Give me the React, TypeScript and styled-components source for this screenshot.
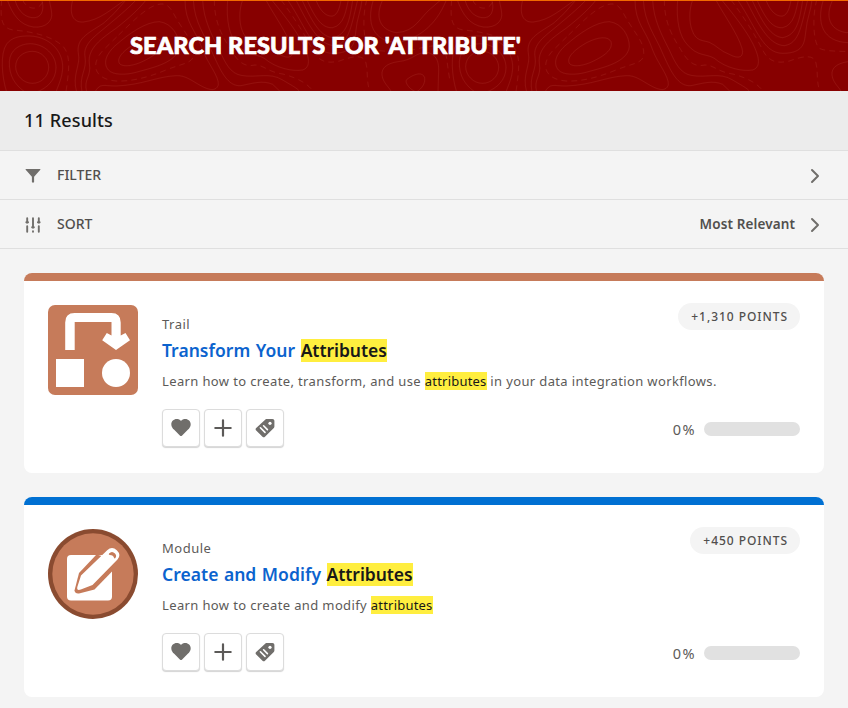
import React from "react";
import styled, { createGlobalStyle } from "styled-components";

const GlobalStyle = createGlobalStyle`
  *, *::before, *::after { box-sizing: border-box; }
  html, body { margin: 0; background: #f4f4f4; }
  body { font-family: "Noto Sans", "Open Sans", sans-serif; color: #514f4d; overflow: hidden; }
`;

const Page = styled.div`
  height: 708px;
  overflow: hidden;
  background: #f4f4f4;
`;

const Hero = styled.header`
  position: relative;
  display: flex;
  align-items: center;
  height: 91px;
  padding: 0 130px 2px;
  border-top: 1px solid #f26a00;
  background: #870000;
`;

const Contours = styled.svg`
  position: absolute;
  inset: 0;
  width: 100%;
  height: 90px;
`;

const HeroTitle = styled.h1`
  position: relative;
  margin: 0;
  font: 900 23.5px/32px Lato, sans-serif;
  letter-spacing: 0.12px;
  -webkit-text-stroke: 0.7px #fff;
  text-transform: uppercase;
  white-space: nowrap;
  color: #fff;
`;

const ResultsBar = styled.div`
  height: 60px;
  padding: 0 24px;
  border-bottom: 1px solid #dfdfdf;
  background: #ececec;
  font-size: 18px;
  font-weight: 500;
  line-height: 59px;
  letter-spacing: 0.15px;
  color: #181818;
`;

const OptionRow = styled.div`
  display: flex;
  align-items: center;
  height: 49px;
  padding: 0 28px 0 25px;
  border-bottom: 1px solid #dfdfdf;
  font-size: 14px;
  font-weight: 500;
  line-height: 20px;
  color: #514f4d;
  & > svg { flex: none; position: relative; top: 1px; }
`;

const OptionLabel = styled.span`
  flex: 1;
  margin-left: 16px;
`;

const OptionValue = styled.span`
  margin-right: 15px;
  font-size: 13.5px;
  font-weight: 600;
  letter-spacing: 0.12px;
`;

const CardList = styled.main`
  display: flex;
  flex-direction: column;
  gap: 24px;
  padding: 24px;
`;

const Card = styled.article<{ $accent: string }>`
  height: 200px;
  border-radius: 8px;
  overflow: hidden;
  background: #fff;
  &::before { content: ""; display: block; height: 8px; background: ${(p) => p.$accent}; }
`;

const CardBody = styled.div`
  display: flex;
  height: 192px;
  padding: 24px;
  & > svg { flex: none; }
`;

const Details = styled.div`
  flex: 1;
  display: flex;
  flex-direction: column;
  margin-left: 24px;
`;

const TopLine = styled.div`
  display: flex;
  justify-content: space-between;
  height: 30px;
`;

const Kind = styled.span`
  padding-top: 9px;
  font-size: 13px;
  line-height: 20px;
  letter-spacing: 0.5px;
  color: #5c5a58;
`;

const Points = styled.span`
  height: 27px;
  margin-top: -2px;
  padding: 0 12px 0 13px;
  border-radius: 14px;
  background: #f4f4f4;
  font-size: 12px;
  font-weight: 500;
  line-height: 27px;
  letter-spacing: 0.95px;
  white-space: nowrap;
`;

const Title = styled.h2`
  margin: 0;
  font-size: 17.5px;
  font-weight: 600;
  line-height: 30px;
  letter-spacing: 0.03px;
  word-spacing: 0.9px;
  color: #0b63ce;
`;

const Mark = styled.mark<{ $tall?: boolean }>`
  display: inline-block;
  height: ${(p) => (p.$tall ? 23 : 18)}px;
  line-height: ${(p) => (p.$tall ? 23 : 18)}px;
  letter-spacing: ${(p) => (p.$tall ? -0.05 : 0.2)}px;
  background: #ffee3f;
  color: #181818;
`;

const Summary = styled.p`
  margin: 6px 0 0;
  font-size: 13px;
  line-height: 20px;
  letter-spacing: 0.37px;
  white-space: nowrap;
  color: #5c5a58;
`;

const Footer = styled.div`
  display: flex;
  align-items: center;
  height: 38px;
  margin-top: 18px;
`;

const IconButton = styled.button`
  display: grid;
  place-items: center;
  width: 38px;
  height: 38px;
  margin: 0 4px 0 0;
  padding: 0;
  border: 1px solid #dcdcdc;
  border-radius: 4px;
  background: #fff;
  box-shadow: 0 1px 1px #d4d4d4;
`;

const Percent = styled.span`
  margin: 2px 8px 0 auto;
  font-size: 14.5px;
  line-height: 20px;
  letter-spacing: 1.4px;
  color: #5c5a58;
`;

const Track = styled.div`
  width: 96px;
  height: 14px;
  margin-top: 2px;
  border-radius: 7px;
  background: #e1e1e1;
`;

/* One contour tile is 450px wide, drawn on a grid three times finer. */
const solidContours = [
  "M22 0C38 45 60 75 100 81C140 85 158 60 155 40C154 25 150 15 148 0",
  "M45 0C55 38 80 55 105 53C130 50 132 20 125 0",
  "M218 0C205 50 225 68 250 66C300 60 330 30 375 0",
  "M97 154C124 154 146 176 146 202C146 229 124 250 97 250C70 250 47 226 47 200C47 172 70 154 97 154Z",
  "M90 131C135 132 168 165 168 203C168 240 140 265 110 276M75 276C45 255 27 228 28 185C30 150 58 132 90 131",
  "M90 108C145 110 190 150 188 205C186 235 175 255 168 276M20 276C5 230 0 160 20 132C35 112 60 107 90 108",
  "M230 276C215 225 243 195 235 160C228 115 265 100 310 70C340 45 360 20 378 0",
  "M246 276C236 225 262 210 255 170C248 130 290 105 325 75C360 45 385 25 408 0",
  "M260 276C250 235 275 232 268 190C262 145 305 115 348 85C380 60 415 30 438 0",
  "M358 190C348 170 380 145 410 128C445 110 475 108 483 125C490 150 460 170 420 188C390 200 365 200 358 190Z",
  "M348 135C388 100 438 65 478 65C518 70 538 110 538 140C533 190 448 205 408 217C378 225 340 226 325 210C305 185 325 155 348 135",
  "M555 0C555 70 588 90 608 150C623 190 658 230 655 255C648 275 628 270 608 260C578 245 558 225 528 227C468 230 428 255 348 258C310 258 300 248 285 276",
  "M580 0C583 70 618 110 638 160C663 215 683 260 723 257C758 250 788 240 818 253L842 276",
  "M608 0C610 60 638 110 658 150C678 195 693 220 723 226C768 235 808 215 848 240C878 258 893 265 900 276",
  "M683 0C678 60 688 110 713 135C743 170 768 160 793 175C828 205 878 215 908 210C938 200 923 160 908 130C888 90 848 40 815 0",
  "M728 0C716 30 718 70 726 90C738 125 758 120 778 127C798 135 813 155 838 163C868 180 883 170 876 145C863 100 818 40 798 0",
  "M948 0C963 40 983 50 998 48C1013 45 1020 20 1023 0",
  "M921 0C948 60 968 85 998 83C1033 75 1038 30 1045 0",
  "M906 0C938 70 963 110 998 113C1038 105 1048 70 1058 0",
  "M888 0C928 80 958 135 1003 137C1048 130 1053 80 1073 0",
  "M863 0C918 80 938 160 998 160C1068 160 1063 120 1068 90C1070 60 1083 30 1086 0",
  "M1148 0C1124 50 1139 90 1189 98C1249 95 1259 50 1299 20L1322 0",
  "M1120 0C1098 70 1119 125 1194 128C1279 110 1319 50 1339 0",
  "M1174 276C1169 262 1149 250 1146 225C1144 205 1159 190 1194 185C1244 180 1245 155 1285 158C1310 165 1316 185 1316 210L1314 276",
  "M1249 276C1230 270 1210 245 1222 237C1245 220 1268 215 1274 233C1276 250 1267 265 1249 276",
];
const dashedContours = [
  "M5 0C0 60 5 85 40 90C100 95 160 110 190 140C215 170 205 220 198 276",
  "M68 0C80 30 120 35 130 0",
  "M356 105C398 65 448 10 488 12C513 15 518 40 538 70C563 110 583 130 581 165C578 190 548 190 498 210C438 235 388 245 348 243C285 238 268 195 310 150Z",
  "M643 0C643 70 668 110 693 150C713 185 733 200 758 196C788 190 798 215 848 222C898 235 928 255 940 276",
  "M843 0C888 60 918 110 938 150C958 190 988 190 1018 183C1068 165 1093 165 1098 190C1105 220 1098 240 1110 276",
  "M1100 0C1086 50 1090 130 1108 145C1128 155 1168 153 1194 155C1240 155 1290 130 1322 140C1350 150 1335 230 1364 276",
];

function ContourPattern() {
  return (
    <Contours aria-hidden="true">
      <defs>
        <pattern id="contours" width="1350" height="276" patternUnits="userSpaceOnUse" patternTransform="translate(0 -1) scale(.33333)">
          <g fill="none" stroke="#ffa080" strokeOpacity=".1" strokeWidth="3">
            {solidContours.map((d) => <path key={d} d={d} />)}
            {dashedContours.map((d) => <path key={d} d={d} strokeDasharray="17 13" />)}
          </g>
        </pattern>
      </defs>
      <rect width="100%" height="100%" fill="url(#contours)" />
    </Contours>
  );
}

const FunnelIcon = () => (
  <svg width="16" height="16" viewBox="0 0 16 16" fill="#706e6b">
    <path d="M1.100.9h13.800c.5 0 .7.5.4.900L9.100 8.700v5.200c0 .4-.3.700-.6.700h-1c-.3 0-.6-.3-.6-.7V8.700L.7 1.800C.4 1.400.6.9 1.100.9Z" />
  </svg>
);

const SlidersIcon = () => (
  <svg width="16" height="16" viewBox="0 0 16 16" fill="none" stroke="#706e6b" strokeLinecap="round">
    <path strokeWidth="1.900" d="M2.200 1.300v4M2.200 9.300v5.400M8 1.300v9M8 14.300v.5M13.800 1.300v4M13.800 9.300v5.400" />
    <path strokeWidth="2.300" d="M1.500 5.300h1.400M7.300 10.300h1.400M13.100 5.300h1.400" />
  </svg>
);

const Chevron = () => (
  <svg width="10" height="16" viewBox="0 0 10 16" fill="none" stroke="#706e6b" strokeWidth="2" strokeLinecap="round" strokeLinejoin="round">
    <path d="M2 2l6 6-6 6" />
  </svg>
);

const HeartIcon = () => (
  <svg width="20" height="20" viewBox="0 0 20 20" fill="#706e6b">
    <path d="M10 3C8.900 1.500 7.400 1 5.700 1C2.700 1 .3 3.300.3 6.200c0 2.400 1.200 4 2.900 5.600l5.900 5.900c.5.500 1.300.500 1.800 0l5.900-5.900c1.700-1.600 2.900-3.200 2.900-5.600C19.700 3.300 17.300 1 14.300 1C12.600 1 11.100 1.500 10 3Z" />
  </svg>
);

const PlusIcon = () => (
  <svg width="20" height="20" viewBox="0 0 20 20" fill="none" stroke="#5c5a58" strokeWidth="2.200" strokeLinecap="round">
    <path d="M10 2.300v15.400M2.300 10h15.400" />
  </svg>
);

const TagIcon = () => (
  <svg width="20" height="20" viewBox="0 0 20 20">
    <path fill="#706e6b" d="M10.400 1.500c.5-.5.900-.6 1.500-.6h5.500c1.200 0 2 .8 2 2v5.500c0 .6-.2 1.100-.6 1.500l-8.800 8.800c-.8.800-1.700.8-2.500 0L1.200 12.400c-.8-.8-.8-1.700 0-2.500Z" />
    <circle cx="15" cy="5.300" r="1.600" fill="#fff" />
    <path stroke="#fff" strokeWidth="1.600" strokeLinecap="round" d="M5.400 9.800l4.600 4.600M8.600 7.800l3.800 3.800" />
  </svg>
);

const TrailBadge = () => (
  <svg width="90" height="90" viewBox="0 0 90 90">
    <rect width="90" height="90" rx="7" fill="#c67b5a" />
    <path fill="#fff" d="M17.200 45V17.500Q17.200 8 26.500 8h37Q72.700 8 72.700 17.500V30.500l4.800-2.500 4.500 7.300L68 45 54.200 35.300l4.600-7.300 4.700 2.500V17H26.700v28Z" />
    <path fill="#fff" d="M8 54h28v28H8z" />
    <circle cx="68" cy="68" r="14" fill="#fff" />
  </svg>
);

const ModuleBadge = () => (
  <svg width="90" height="90" viewBox="0 0 90 90">
    <circle cx="45" cy="45" r="45" fill="#8a4b30" />
    <circle cx="45" cy="45" r="40.700" fill="#c67b5a" />
    <rect x="19" y="26" width="45" height="45.500" rx="4" fill="#fff" />
    <path fill="#c67b5a" d="M48.500 25.500L31 44 26.500 61.500Q27 65 31 64.500L46.500 60.500 64.500 42V30Z" />
    <path fill="#fff" d="M59.200 21.300Q64 16.500 68.800 21.300Q73.600 26 69.500 30.500L44.500 56 32.800 60.500Q28.500 62 29.300 58L33 46.500Z" />
    <path fill="#c67b5a" d="M61 24.500Q64 21.500 67 24.500Q69.200 27 67.200 29.200Q66.500 29.700 66 28.800Q65.500 26.200 61.800 26Q60.200 25.500 61 24.500Z" />
  </svg>
);

const results = [
  { kind: "Trail", title: "Transform Your ", before: "Learn how to create, transform, and use ", after: " in your data integration workflows.", points: "+1,310 POINTS", accent: "#c67b5a", badge: <TrailBadge /> },
  { kind: "Module", title: "Create and Modify ", before: "Learn how to create and modify ", after: "", points: "+450 POINTS", accent: "#0070d2", badge: <ModuleBadge /> },
];

export default function App() {
  return (
    <Page>
      <GlobalStyle />
      <Hero>
        <ContourPattern />
        <HeroTitle>Search results for 'attribute'</HeroTitle>
      </Hero>
      <ResultsBar>11 Results</ResultsBar>
      <OptionRow>
        <FunnelIcon />
        <OptionLabel>FILTER</OptionLabel>
        <Chevron />
      </OptionRow>
      <OptionRow>
        <SlidersIcon />
        <OptionLabel>SORT</OptionLabel>
        <OptionValue>Most Relevant</OptionValue>
        <Chevron />
      </OptionRow>
      <CardList>
        {results.map((r) => (
          <Card key={r.kind} $accent={r.accent}>
            <CardBody>
              {r.badge}
              <Details>
                <TopLine>
                  <Kind>{r.kind}</Kind>
                  <Points>{r.points}</Points>
                </TopLine>
                <Title>{r.title}<Mark $tall>Attributes</Mark></Title>
                <Summary>{r.before}<Mark>attributes</Mark>{r.after}</Summary>
                <Footer>
                  <IconButton aria-label="Favorite"><HeartIcon /></IconButton>
                  <IconButton aria-label="Add"><PlusIcon /></IconButton>
                  <IconButton aria-label="Tags"><TagIcon /></IconButton>
                  <Percent>0%</Percent>
                  <Track />
                </Footer>
              </Details>
            </CardBody>
          </Card>
        ))}
      </CardList>
    </Page>
  );
}
